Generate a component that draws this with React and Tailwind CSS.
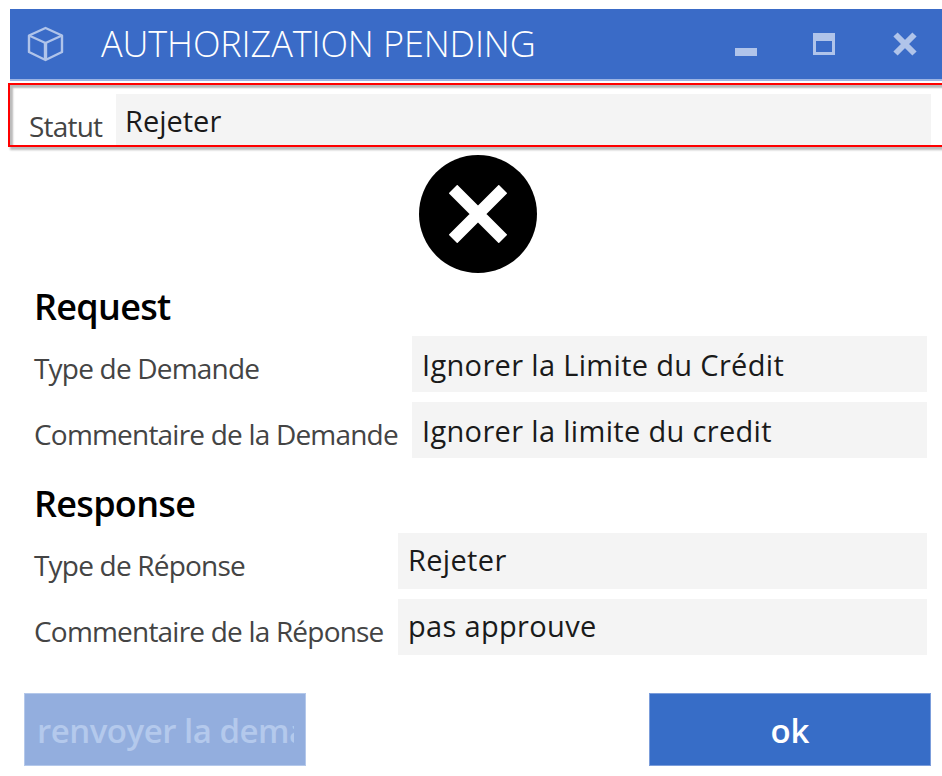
const TitleBar = () => (
  <header className="ml-[10px] mt-[9px] flex h-[72px] shrink-0 items-center border-b-2 border-[#9db4e3] bg-[#3a6bc7] text-[#b0c4ea]">
    <svg className="ml-[17px] h-[36px] w-[37px] shrink-0" viewBox="0 0 37 36" fill="none" stroke="currentColor" strokeWidth="2.4" strokeLinejoin="round">
      <path d="M18.5 2 35 9.5V26L18.5 34 2 26V9.5Z" />
      <path d="M2 9.5 18.5 17 35 9.5" />
      <path d="M18.5 17v17" strokeWidth="3.4" />
    </svg>
    <h1 className="ml-[37px] w-[600px] whitespace-nowrap text-[36px] font-light leading-[48px] tracking-[-0.1px] text-white">
      AUTHORIZATION PENDING
    </h1>
    <div className="ml-auto flex shrink-0 items-center">
      <button className="flex h-[24px] w-[22px] items-end" aria-label="Minimize">
        <span className="h-[8px] w-full bg-[#b0c4ea]"></span>
      </button>
      <button className="ml-[56px] h-[22px] w-[22px] border-[3px] border-t-[8px] border-[#b0c4ea]" aria-label="Maximize"></button>
      <button className="ml-[58px] mr-[25px]" aria-label="Close">
        <svg className="h-[24px] w-[24px]" viewBox="0 0 24 24" stroke="currentColor" strokeWidth="6">
          <path d="M2.5 2.5l19 19M21.5 2.5l-19 19" />
        </svg>
      </button>
    </div>
  </header>
);

const Field = ({ label, value, className, valueClassName }) => (
  <div className="flex h-[56px]">
    <label className={`shrink-0 whitespace-nowrap pt-[12px] text-[28px] leading-[40px] tracking-[-0.8px] text-[#444] ${className}`}>
      {label}
    </label>
    <div className={`flex-1 whitespace-nowrap bg-[#f4f4f4] pl-[10px] text-[29px] leading-[40px] tracking-[0.33px] text-[#1a1a1a] ${valueClassName}`}>
      {value}
    </div>
  </div>
);

const App = () => {
  return (
    <div className="flex h-[776px] w-[942px] flex-col overflow-hidden bg-white font-['Open_Sans','Noto_Sans',sans-serif]">
      <TitleBar />

      <div className="ml-[8px] mt-[2px] flex h-[64px] shrink-0 border-y-2 border-l-2 border-[#ff0000] pt-[9px] shadow-[2px_3px_2px_#bbb,inset_3px_3px_2px_#bbb]">
        <label className="w-[106px] shrink-0 pl-[19px] pt-[12px] text-[28px] leading-[40px] tracking-[-0.8px] text-[#444]">Statut</label>
        <div className="mr-[11px] flex-1 bg-[#f4f4f4] pl-[9px] pt-[7px] text-[29px] leading-[40px] text-[#1a1a1a]">Rejeter</div>
      </div>

      <div className="ml-[419px] mt-[8px] flex h-[118px] w-[118px] shrink-0 items-center justify-center rounded-full bg-black">
        <svg className="h-[58px] w-[58px]" viewBox="0 0 58 58" stroke="white" strokeWidth="12">
          <path d="M4 4l50 50M54 4L4 54" />
        </svg>
      </div>

      <section className="ml-[34px] mr-[15px] mt-[10px] shrink-0">
        <h2 className="h-[53px] text-[36px] font-semibold leading-[48px] tracking-[-0.7px] text-black">Request</h2>
        <div className="flex flex-col gap-[10px]">
          <Field label="Type de Demande" value="Ignorer la Limite du Crédit" className="w-[378px]" valueClassName="pt-[9px]" />
          <Field label="Commentaire de la Demande" value="Ignorer la limite du credit" className="w-[378px]" valueClassName="pt-[9px]" />
        </div>
      </section>

      <section className="ml-[34px] mr-[15px] mt-[22px] shrink-0">
        <h2 className="h-[53px] text-[36px] font-semibold leading-[48px] tracking-[-0.7px] text-black">Response</h2>
        <div className="flex flex-col gap-[10px]">
          <Field label="Type de Réponse" value="Rejeter" className="w-[364px]" valueClassName="pt-[7px]" />
          <Field label="Commentaire de la Réponse" value="pas approuve" className="w-[364px]" valueClassName="pt-[7px]" />
        </div>
      </section>

      <footer className="ml-[24px] mr-[11px] mt-[38px] flex shrink-0 justify-between text-[33px] font-semibold">
        <button disabled className="h-[73px] w-[282px] border border-[#b4c8ea] bg-[#93aede] pl-[12px] pr-[11px] pt-[2px] text-left tracking-[-0.5px] text-[#b4c9ec]">
          <span className="block overflow-hidden whitespace-nowrap">renvoyer la dema</span>
        </button>
        <button className="h-[73px] w-[282px] border border-[#7b9ddb] bg-[#376dc7] pt-[2px] text-white">ok</button>
      </footer>
    </div>
  );
};

export default App;
